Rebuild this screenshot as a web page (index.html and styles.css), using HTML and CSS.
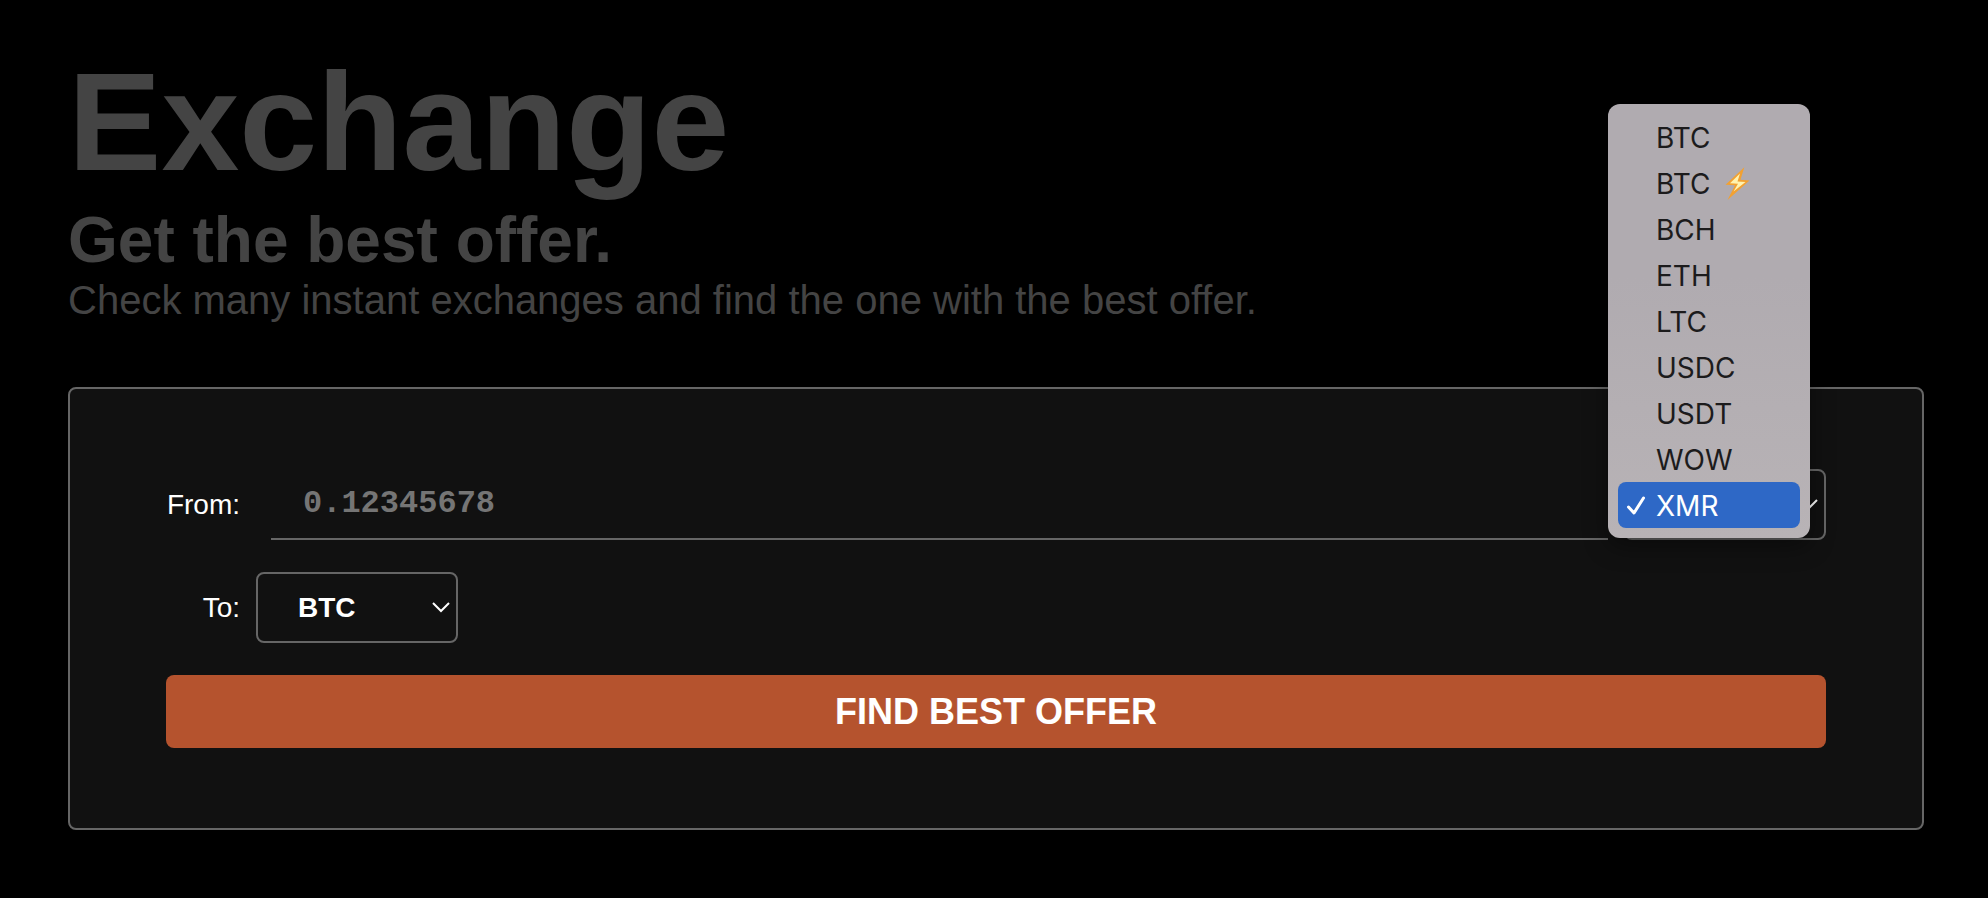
FILE: index.html
```html
<!DOCTYPE html>
<html lang="en">
<head>
<meta charset="utf-8">
<title>Exchange</title>
<link rel="stylesheet" href="styles.css">
</head>
<body>
<main class="page">
  <header class="intro">
    <h1 class="title">Exchange</h1>
    <h2 class="subtitle">Get the best offer.</h2>
    <p class="lead">Check many instant exchanges and find the one with the best offer.</p>
  </header>
  <form class="card">
    <div class="row">
      <label class="label" for="amount">From:</label>
      <input class="amount" id="amount" type="text" placeholder="0.12345678">
      <div class="picker">
        <select class="select" aria-label="From currency">
          <option>XMR</option>
        </select>
        <svg class="chevron" viewBox="0 0 20 12" aria-hidden="true"><path d="M2 2l8 8 8-8"/></svg>
        <ul class="menu" role="listbox" aria-label="Currency">
          <li class="item" role="option">BTC</li>
          <li class="item" role="option">BTC
            <svg class="bolt" viewBox="0 0 26 34" aria-hidden="true"><path class="bolt-edge" d="M19.300 .3L.5 17.800l9.500 .4L2.500 33 24.500 13.500l-9-.7z"/><path class="bolt-core" d="M15 6.500L5 16.300l8 .5L8.500 24.500 20.500 15l-8-.6z"/></svg>
          </li>
          <li class="item" role="option">BCH</li>
          <li class="item" role="option">ETH</li>
          <li class="item" role="option">LTC</li>
          <li class="item" role="option">USDC</li>
          <li class="item" role="option">USDT</li>
          <li class="item" role="option">WOW</li>
          <li class="item item-selected" role="option" aria-selected="true">
            <svg class="check" viewBox="0 0 20 20" aria-hidden="true"><path d="M2.500 11L8 17 17.500 2"/></svg>XMR</li>
        </ul>
      </div>
    </div>
    <div class="row">
      <label class="label" for="target">To:</label>
      <div class="picker">
        <select class="select" id="target">
          <option>BTC</option>
        </select>
        <svg class="chevron" viewBox="0 0 20 12" aria-hidden="true"><path d="M2 2l8 8 8-8"/></svg>
      </div>
    </div>
    <button class="submit" type="button">FIND BEST OFFER</button>
  </form>
</main>
</body>
</html>
```
FILE: styles.css
```css
* {
  box-sizing: border-box;
}

body {
  margin: 0;
  background: #000;
  color: #fff;
  font-family: "Liberation Sans", Arial, sans-serif;
}

.page {
  display: flex;
  flex-direction: column;
  gap: 65px;
  padding: 42px 64px 40px 68px;
}

.intro {
  color: #444;
}

.title,
.subtitle,
.lead {
  margin: 0;
}

.title {
  font-size: 140px;
  line-height: 160px;
}

.subtitle {
  font-size: 64px;
  line-height: 76px;
}

.lead {
  font-size: 40px;
  line-height: 44px;
}

.card {
  display: flex;
  flex-direction: column;
  gap: 32px;
  padding: 80px 96px;
  border: 2px solid #666;
  border-radius: 8px;
  background: #111;
}

.row {
  display: flex;
  align-items: center;
  gap: 16px;
}

.label {
  width: 74px;
  font-size: 28px;
  text-align: right;
}

.amount {
  flex: 1;
  min-width: 0;
  height: 71px;
  margin-left: 15px;
  padding: 0 32px;
  border: 0;
  border-bottom: 2px solid #666;
  background: transparent;
  color: #fff;
  font: bold 32px "Liberation Mono", "Courier New", monospace;
}

.amount::placeholder {
  color: #757575;
}

.picker {
  position: relative;
}

.select {
  display: block;
  width: 202px;
  height: 71px;
  padding: 0 40px;
  border: 2px solid #666;
  border-radius: 8px;
  appearance: none;
  background: #111;
  color: #fff;
  font: bold 28px "Liberation Sans", Arial, sans-serif;
}

.chevron {
  position: absolute;
  top: 29px;
  right: 7px;
  width: 20px;
  height: 12px;
  fill: none;
  stroke: #fff;
  stroke-width: 2;
  pointer-events: none;
}

.menu {
  position: absolute;
  right: 16px;
  bottom: 2px;
  width: 202px;
  margin: 0;
  padding: 10px;
  border-radius: 12px;
  background: linear-gradient(#b0abb0 40%, #b8b3b6);
  box-shadow: 0 8px 24px rgba(0, 0, 0, 0.4);
  color: #1c1b1c;
  font: 28px Inter, "Liberation Sans", sans-serif;
  list-style: none;
}

.item {
  display: flex;
  align-items: center;
  gap: 15px;
  height: 46px;
  padding-top: 2px;
  padding-left: 38px;
  border-radius: 8px;
}

.item-selected {
  gap: 10px;
  padding-left: 8px;
  background: #2e68c6;
  color: #fff;
}

.bolt {
  width: 26px;
  height: 34px;
}

.bolt-edge {
  fill: #f2a132;
}

.bolt-core {
  fill: #fff3b0;
}

.check {
  width: 20px;
  height: 20px;
  fill: none;
  stroke: #fff;
  stroke-width: 3;
  stroke-linecap: round;
  stroke-linejoin: round;
}

.submit {
  height: 73px;
  border: 0;
  border-radius: 8px;
  background: #b5532e;
  color: #fff;
  font: bold 36px "Liberation Sans", Arial, sans-serif;
}
```
